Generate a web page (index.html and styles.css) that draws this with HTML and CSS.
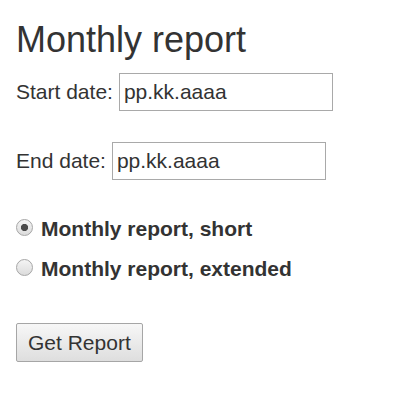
FILE: index.html
```html
<!DOCTYPE html>
<html>
<head>
<meta charset="utf-8">
<link rel="stylesheet" href="styles.css">
</head>
<body>
<form class="report">
  <h1 class="title">Monthly report</h1>
  <div class="field field-start">
    <label class="field-label" for="start">Start date:</label>
    <input class="date-input" id="start" type="text" value="pp.kk.aaaa">
  </div>
  <div class="field field-end">
    <label class="field-label" for="end">End date:</label>
    <input class="date-input" id="end" type="text" value="pp.kk.aaaa">
  </div>
  <label class="choice choice-first">
    <input class="radio" type="radio" name="kind" checked>
    <span class="choice-text">Monthly report, short</span>
  </label>
  <label class="choice choice-second">
    <input class="radio" type="radio" name="kind">
    <span class="choice-text">Monthly report, extended</span>
  </label>
  <div class="actions">
    <button class="btn" type="button">Get Report</button>
  </div>
</form>
</body>
</html>
```

FILE: styles.css
```css
html, body {
  margin: 0;
  padding: 0;
  background: #ffffff;
}

body {
  font-family: "Liberation Sans", Arial, sans-serif;
  color: #333333;
  font-size: 21px;
}

.report {
  display: flex;
  flex-direction: column;
  align-items: flex-start;
  padding: 20px 16px 0 16px;
}

.title {
  margin: 0;
  font-size: 36px;
  font-weight: 400;
  line-height: 40px;
  color: #333333;
}

.field {
  display: flex;
  align-items: center;
  gap: 6px;
  height: 38px;
}

.field-start {
  margin-top: 13px;
}

.field-end {
  margin-top: 31px;
}

.field-label {
  line-height: 24px;
}

.date-input {
  box-sizing: border-box;
  width: 214px;
  height: 38px;
  margin: 0;
  padding: 0 4px;
  border: 1px solid #a9a9a9;
  border-radius: 0;
  font-family: "Liberation Sans", Arial, sans-serif;
  font-size: 21px;
  color: #333333;
  background: #ffffff;
  outline: none;
}

.choice {
  display: flex;
  align-items: flex-start;
  gap: 8px;
  height: 24px;
  line-height: 24px;
  font-weight: 700;
}

.choice-first {
  margin-top: 37px;
}

.choice-second {
  margin-top: 16px;
}

.radio {
  -webkit-appearance: none;
  appearance: none;
  box-sizing: border-box;
  width: 17px;
  height: 17px;
  margin: 2px 0 0 0;
  border: 1px solid #a6a6a6;
  border-radius: 50%;
  background: linear-gradient(#f4f4f4, #dcdcdc);
  flex: none;
}

.radio:checked {
  background:
    radial-gradient(circle, #4a4a4a 0, #4a4a4a 3.2px, rgba(74,74,74,0) 4px),
    linear-gradient(#f4f4f4, #dcdcdc);
}

.actions {
  margin-top: 42px;
}

.btn {
  box-sizing: border-box;
  height: 39px;
  margin: 0;
  padding: 0 11px;
  border: 1px solid #a6a6a6;
  border-radius: 2px;
  background: linear-gradient(#f7f7f7, #dedede);
  font-family: "Liberation Sans", Arial, sans-serif;
  font-size: 21px;
  color: #333333;
  line-height: 24px;
}
```
